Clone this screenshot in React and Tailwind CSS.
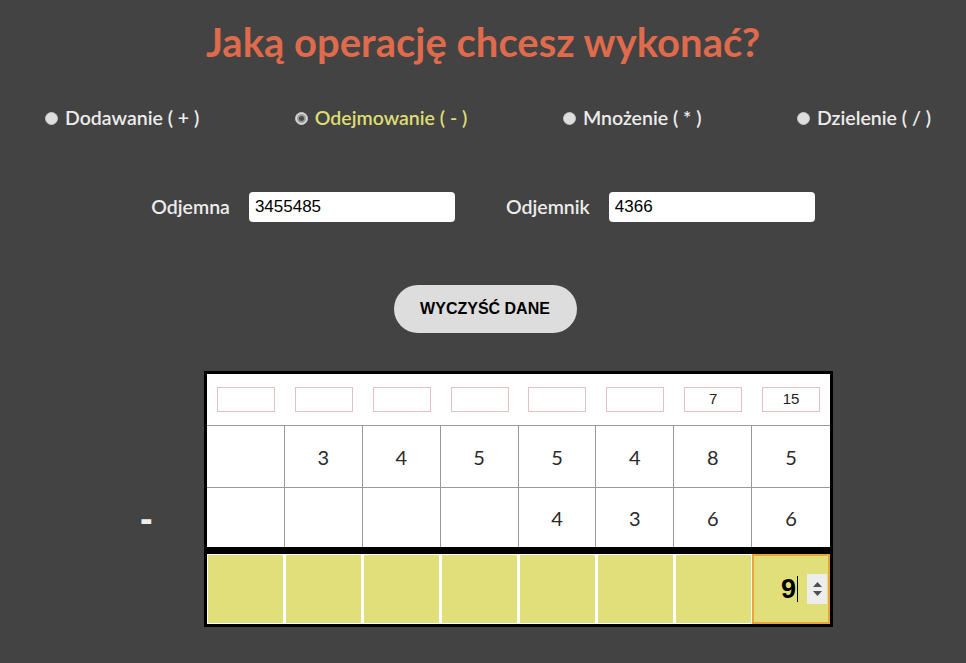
import React, { useState } from 'react';

const ops = [
  { label: 'Dodawanie ( + )' },
  { label: 'Odejmowanie ( - )' },
  { label: 'Mnożenie ( * )' },
  { label: 'Dzielenie ( / )' },
];

const borrows = ['', '', '', '', '', '', '7', '15'];
const topRow = ['', '3', '4', '5', '5', '4', '8', '5'];
const bottomRow = ['', '', '', '', '4', '3', '6', '6'];

function Radio({ checked }) {
  return (
    <span className="w-[13px] h-[13px] rounded-full bg-[#dedede] border border-[#c4c4c4] flex items-center justify-center shrink-0">
      {checked && <span className="w-[5px] h-[5px] rounded-full bg-[#4a4a4a] ring-2 ring-[#9a9a9a]" />}
    </span>
  );
}

function App() {
  const [selected, setSelected] = useState(1);
  const [first, setFirst] = useState('3455485');
  const [second, setSecond] = useState('4366');

  return (
    <div className="min-h-screen bg-[#434343] font-['Lato',sans-serif] pt-[18px]">
      <h1 className="text-center text-[40px] leading-[48px] font-bold text-[#df6a4c]">
        Jaką operację chcesz wykonać?
      </h1>

      <div className="flex justify-between pl-[45px] pr-[35px] mt-[41px] h-[22px]">
        {ops.map((op, i) => (
          <label
            key={op.label}
            className="flex items-center gap-[7px] cursor-pointer"
            onClick={() => setSelected(i)}
          >
            <Radio checked={selected === i} />
            <span
              className={`text-[19.5px] leading-[22px] font-semibold ${
                selected === i ? 'text-[#dedd72]' : 'text-[#ececec]'
              }`}
            >
              {op.label}
            </span>
          </label>
        ))}
      </div>

      <div className="flex justify-center items-center mt-[63px]">
        <span className="text-[19.5px] font-semibold text-[#ececec] mr-[19px]">Odjemna</span>
        <input
          className="w-[206px] h-[30px] rounded-[4px] bg-white px-[6px] text-[17px] font-['Liberation_Sans',Arial,sans-serif] text-black outline-none"
          value={first}
          onChange={(e) => setFirst(e.target.value)}
        />
        <span className="text-[19.5px] font-semibold text-[#ececec] ml-[51px] mr-[19px]">Odjemnik</span>
        <input
          className="w-[206px] h-[30px] rounded-[4px] bg-white px-[6px] text-[17px] font-['Liberation_Sans',Arial,sans-serif] text-black outline-none"
          value={second}
          onChange={(e) => setSecond(e.target.value)}
        />
      </div>

      <div className="flex justify-center mt-[63px]">
        <button className="w-[183px] h-[48px] rounded-full bg-[#dddddd] text-[16px] font-bold text-black font-['Liberation_Sans',Arial,sans-serif] ml-[4px]">
          WYCZYŚĆ DANE
        </button>
      </div>

      <div className="flex justify-center mt-[38px]">
        <div className="w-[71px] flex flex-col pl-[7px]">
          <div className="h-[118px]" />
          <div className="h-[60px] flex items-center text-[38px] font-bold text-[#eeeeee] font-['Liberation_Sans',Arial,sans-serif]">
            -
          </div>
        </div>

        <div className="w-[629px] border-[3px] border-black bg-white">
          <div className="grid grid-cols-8 h-[52px] border-b border-[#999999]">
            {borrows.map((v, i) => (
              <div key={i} className="flex items-center justify-center">
                <div className="w-[58px] h-[25px] border border-[#e6c0c0] flex items-center justify-center text-[15px] text-[#222] font-['Liberation_Sans',Arial,sans-serif]">
                  {v}
                </div>
              </div>
            ))}
          </div>

          <div className="grid grid-cols-8 h-[62px] border-b border-[#999999]">
            {topRow.map((v, i) => (
              <div
                key={i}
                className={`flex items-center justify-center text-[20px] text-[#2a2a2a] ${
                  i < 7 ? 'border-r border-[#999999]' : ''
                }`}
              >
                {v}
              </div>
            ))}
          </div>

          <div className="grid grid-cols-8 h-[59px]">
            {bottomRow.map((v, i) => (
              <div
                key={i}
                className={`flex items-center justify-center text-[20px] text-[#2a2a2a] ${
                  i < 7 ? 'border-r border-[#999999]' : ''
                }`}
              >
                {v}
              </div>
            ))}
          </div>

          <div className="border-t-[7px] border-black bg-white p-[1px] grid grid-cols-8 gap-[3px] h-[77px]">
            {Array.from({ length: 7 }).map((_, i) => (
              <div key={i} className="bg-[#e1df7a]" />
            ))}
            <div className="bg-[#e1df7a] border-2 border-[#e9a43c] -ml-[2px] -mt-[1px] -mb-[1px] -mr-[1px] flex items-center justify-end pr-[1px]">
              <span className="text-[27px] font-bold text-black font-['Liberation_Sans',Arial,sans-serif] leading-none">9</span>
              <span className="w-[1px] h-[26px] bg-black ml-[1px]" />
              <span className="ml-[9px] w-[20px] h-[30px] bg-[#ededed] flex flex-col items-center justify-center gap-[4px]">
                <svg width="9" height="5" viewBox="0 0 9 5">
                  <path d="M0 5 L4.5 0 L9 5 Z" fill="#505050" />
                </svg>
                <svg width="9" height="5" viewBox="0 0 9 5">
                  <path d="M0 0 L4.5 5 L9 0 Z" fill="#505050" />
                </svg>
              </span>
            </div>
          </div>
        </div>
      </div>
    </div>
  );
}

export default App;
